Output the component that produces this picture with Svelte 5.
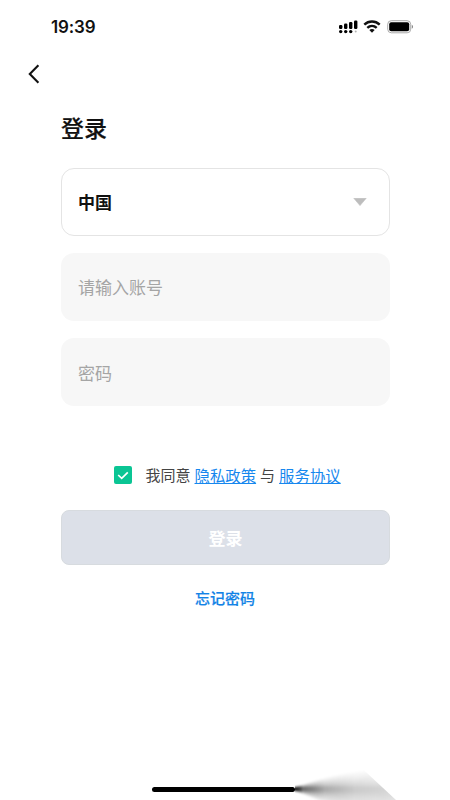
<script>
	let account = $state('');
	let password = $state('');
	let agreed = $state(true);

	let dots = [0, 5, 10, 15];
	let bars = [4, 5.5, 7, 8.5];
	// how far each layer of the shadow has opened at its right end
	let spread = [1, 2.5, 4, 6, 8, 10.5, 13, 16, 19];
</script>

<div class="screen">
	<header class="status">
		<span class="time">19:39</span>
		<div class="indicators">
			<svg class="signal" width="19" height="14" viewBox="0 0 19 14">
				{#each bars as h, i}
					<rect x={i * 5} y={9 - h} width="3.4" height={h} rx="1.2" />
				{/each}
				{#each dots as x, i}
					<circle cx={x + 1.7} cy="11.6" r={i === 3 ? 1 : 1.7} opacity={i === 3 ? 0.3 : 1} />
				{/each}
			</svg>
			<svg class="wifi" width="18" height="13" viewBox="0 0 18 13">
				<path d="M1.3 4.7C5.7.5 12.3.5 16.7 4.7" />
				<path d="M4.3 7.8c2.7-2.5 6.7-2.5 9.4 0" />
				<path class="fill" d="M9 12.7 6.3 10c1.5-1.4 3.9-1.4 5.4 0z" />
			</svg>
			<svg width="27" height="14" viewBox="0 0 27 14">
				<rect x=".7" y=".7" width="23" height="12.1" rx="3.6" fill="none" stroke="#aaa" />
				<rect x="2.2" y="2.2" width="20" height="9.1" rx="2" />
				<path d="M24.8 4.8c1.5.6 1.5 3.4 0 4z" fill="#777" />
			</svg>
		</div>
	</header>

	<nav>
		<button class="back" aria-label="返回">
			<svg width="12" height="20" viewBox="0 0 12 20">
				<path d="M10.4 1.2 1.8 10l8.6 8.8" fill="none" stroke="#111" stroke-width="2.1" />
			</svg>
		</button>
	</nav>

	<main>
		<h1>登录</h1>

		<button class="field country">
			<span>中国</span>
			<svg width="14" height="8" viewBox="0 0 14 8">
				<path d="M.8.3h12.4L7 7.6z" fill="#bdbdbd" stroke="#bdbdbd" stroke-width=".6" stroke-linejoin="round" />
			</svg>
		</button>
		<input class="field" type="text" placeholder="请输入账号" bind:value={account} />
		<input class="field password" type="password" placeholder="密码" bind:value={password} />

		<div class="agree">
			<button class="check" class:on={agreed} aria-label="同意" onclick={() => (agreed = !agreed)}>
				{#if agreed}
					<svg width="12" height="9" viewBox="0 0 12 9">
						<path d="M1.2 4 4.7 7.4 10.8 1.3" fill="none" stroke="#fff" stroke-width="1.7" />
					</svg>
				{/if}
			</button>
			<span class="label">我同意</span>
			<a href="#privacy">隐私政策</a>
			<span>与</span>
			<a href="#terms">服务协议</a>
		</div>

		<button class="submit">登录</button>
		<a class="forgot" href="#forgot">忘记密码</a>
	</main>

	<footer>
		<div class="home"></div>
		<svg class="smear" width="155" height="40" viewBox="0 0 155 40">
			<defs>
				<linearGradient id="fan" x1="0" x2="100" y1="0" y2="0" gradientUnits="userSpaceOnUse">
					<stop offset="0" stop-opacity=".22" />
					<stop offset=".08" stop-opacity=".09" />
					<stop offset=".3" stop-opacity=".043" />
					<stop offset=".6" stop-opacity=".025" />
					<stop offset="1" stop-opacity=".018" />
				</linearGradient>
				<filter id="soft" x="-5%" y="-20%" width="110%" height="140%">
					<feGaussianBlur stdDeviation="0.5 1" />
				</filter>
				<clipPath id="edge">
					<path d="M0 0H58L101 40H0z" />
				</clipPath>
			</defs>
			<g clip-path="url(#edge)">
				<g filter="url(#soft)">
					{#each spread as s}
						<path d="M-2 27.5C20 {28 - s * 0.35} 50 {28 - s} 110 {28 - s}V{31 + s * 2.4}C60 {31 + s * 1.4} 20 {30 + s * 0.4} -2 30.5z" fill="url(#fan)" />
					{/each}
				</g>
			</g>
		</svg>
	</footer>
</div>

<style>
	:global(body) {
		margin: 0;
		background: #fff;
	}
	.screen {
		display: flex;
		flex-direction: column;
		box-sizing: border-box;
		width: 450px;
		height: 800px;
		overflow: hidden;
		background: #fff;
		color: #111;
		font-family: "Noto Sans CJK SC", sans-serif;
	}
	button {
		padding: 0;
		border: 0;
		background: none;
		color: inherit;
		font: inherit;
		cursor: pointer;
	}
	svg {
		display: block;
	}

	.status {
		display: flex;
		align-items: center;
		justify-content: space-between;
		height: 53px;
		padding: 0 36px 0 51px;
	}
	.time {
		font: 600 17px/20px Inter, sans-serif;
		letter-spacing: -0.15px;
	}
	.indicators {
		display: flex;
		align-items: center;
		gap: 6px;
	}
	.signal {
		margin-right: -1px;
	}
	.wifi path {
		fill: none;
		stroke: #111;
		stroke-width: 2.4;
	}
	.wifi .fill {
		fill: #111;
		stroke: none;
	}

	nav {
		display: flex;
		align-items: center;
		height: 41px;
		padding-left: 28px;
	}

	main {
		display: flex;
		flex-direction: column;
		padding: 15px 60px 0 61px;
	}
	h1 {
		margin: 0 0 23px;
		font-size: 23px;
		font-weight: 500;
		line-height: 36px;
		-webkit-text-stroke: 0.2px;
	}
	.field {
		display: flex;
		align-items: center;
		box-sizing: border-box;
		width: 100%;
		height: 68px;
		margin: 0 0 17px;
		padding: 0 17px 2px;
		border: 0;
		border-radius: 13px;
		outline: 0;
		background: #f7f7f7;
		font-family: inherit;
		font-size: 17px;
	}
	.field::placeholder {
		color: #a5a5a5;
		opacity: 1;
	}
	.password {
		padding-bottom: 0;
	}
	.country {
		justify-content: space-between;
		padding: 0 22px 2px 16px;
		border: 1px solid #e4e4e4;
		background: #fff;
		font-weight: 700;
	}
	.country svg {
		margin-top: 2px;
	}

	.agree {
		display: flex;
		align-items: center;
		height: 24px;
		margin: 40px 0 23px 53px;
		color: #444;
		font-size: 15px;
		line-height: 24px;
	}
	.agree a {
		color: #1687ee;
		font-size: 15.4px;
		text-decoration: underline;
		text-underline-offset: 1px;
		text-decoration-thickness: 1px;
	}
	.agree span {
		margin: 0 4px;
	}
	.agree .label {
		margin: 0 4px 0 13.5px;
	}
	.check {
		display: flex;
		align-items: center;
		justify-content: center;
		box-sizing: border-box;
		width: 18px;
		height: 18px;
		border: 1px solid #bbb;
		border-radius: 2px;
	}
	.check.on {
		border: 0;
		background: #0ac594;
	}

	.submit {
		height: 55px;
		border: 1px solid #d7dbdf;
		border-radius: 8px;
		background: #dce0e8;
		color: #fff;
		font-size: 17px;
		font-weight: 700;
	}
	.forgot {
		align-self: center;
		margin: 21px 1px 0 0;
		color: #1283e6;
		font-size: 15px;
		font-weight: 500;
		line-height: 24px;
		text-decoration: none;
		-webkit-text-stroke: 0.2px;
	}

	footer {
		display: flex;
		align-items: flex-end;
		height: 40px;
		margin-top: auto;
		padding-left: 152px;
	}
	.home {
		width: 143px;
		height: 5px;
		margin-bottom: 8px;
		border-radius: 3px;
		background: #000;
	}
</style>
